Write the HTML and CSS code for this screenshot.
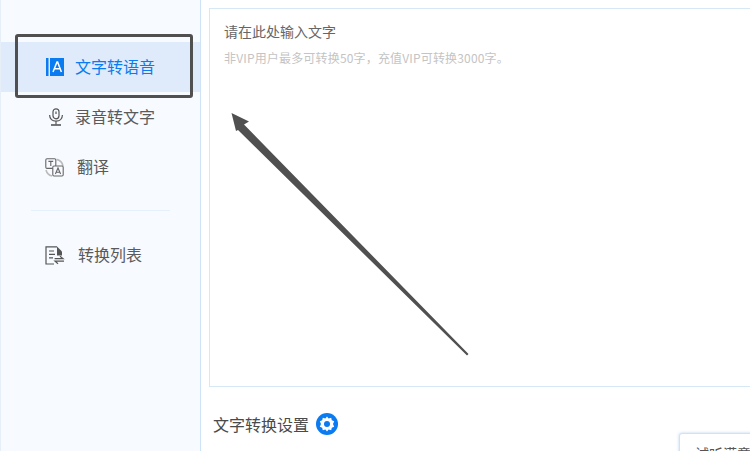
FILE: index.html
```html
<!DOCTYPE html>
<html lang="zh-CN">
<head>
    <meta charset="UTF-8">
    <title>文字转语音</title>
    <link rel="stylesheet" href="styles.css">
</head>
<body>
    <div class="page">
        <!-- Sidebar -->
        <aside class="sidebar">
            <ul class="menu">
                <li class="menu-item active">
                    <svg class="icon icon-tts" width="18" height="18" viewBox="0 0 18 18">
                        <rect x="0" y="0" width="2.5" height="18" fill="#0a7bf0"/>
                        <rect x="4" y="0" width="14" height="18" fill="#0a7bf0"/>
                        <path d="M7 14 L11 4 L11.6 4 L15.4 14 M8.2 10.8 H14.2" fill="none" stroke="#fff" stroke-width="1.5"/>
                    </svg>
                    <span>文字转语音</span>
                </li>
                <li class="menu-item shift-1">
                    <svg class="icon" width="18" height="18" viewBox="0 0 18 18" fill="none" stroke="#555" stroke-width="1.2">
                        <rect x="6" y="0.8" width="6" height="10" rx="3"/>
                        <path d="M9 3.6 V6" />
                        <path d="M2.6 7 C2.6 11 5.4 13.2 9 13.2 C12.6 13.2 15.4 11 15.4 7"/>
                        <path d="M9 13.2 V16.4"/>
                        <path d="M4 17 H14" stroke-width="1.6"/>
                    </svg>
                    <span>录音转文字</span>
                </li>
                <li class="menu-item shift-2">
                    <svg class="icon" width="19" height="19" viewBox="0 0 19 19" fill="none" stroke="#666" stroke-width="1.1">
                        <path d="M11.5 1.4 A8.4 8.4 0 0 1 18 8" stroke="#bbb" stroke-width="1.6"/>
                        <path d="M1 12 A8.4 8.4 0 0 0 7 18" stroke="#bbb" stroke-width="1.6"/>
                        <rect x="0.8" y="0.8" width="10" height="9.6" rx="1.2" fill="#f7faff"/>
                        <path d="M3.4 3.4 H8.2 M5.8 3.4 V8"/>
                        <rect x="7.8" y="8" width="10.4" height="10" rx="1.2" fill="#f7faff"/>
                        <path d="M10.4 16 L13 10 L15.6 16 M11.2 14.2 H14.8"/>
                    </svg>
                    <span>翻译</span>
                </li>
            </ul>
            <div class="menu-divider"></div>
            <ul class="menu">
                <li class="menu-item shift-3">
                    <svg class="icon" width="20" height="19" viewBox="0 0 20 19" fill="none" stroke="#555" stroke-width="1.2">
                        <path d="M12 0.8 H1 V18 H9"/>
                        <path d="M12 0.6 L17 5.6 V9.4 H12 Z" fill="#555" stroke="none"/>
                        <path d="M4 5 H9 M4 8.4 H10 M4 11.8 H8"/>
                        <path d="M9.6 12.6 H18 L15 10.2"/>
                        <path d="M19 15.2 H10 L13 17.8"/>
                    </svg>
                    <span>转换列表</span>
                </li>
            </ul>
        </aside>

        <!-- Main content -->
        <main class="content">
            <div class="input-box">
                <p class="input-tip">请在此处输入文字</p>
                <p class="input-hint">非VIP用户最多可转换50字，充值VIP可转换3000字。</p>
            </div>
            <div class="settings-title">
                <span>文字转换设置</span>
                <svg class="gear" width="22" height="22" viewBox="0 0 22 22">
                    <circle cx="11" cy="11" r="11" fill="#0a7bf0"/>
                    <path d="M11 3.4 L12.6 5.4 L15.2 4.8 L15.8 7.2 L18.2 8.2 L17 11 L18.2 13.8 L15.8 14.8 L15.2 17.2 L12.6 16.6 L11 18.6 L9.4 16.6 L6.8 17.2 L6.2 14.8 L3.8 13.8 L5 11 L3.8 8.2 L6.2 7.2 L6.8 4.8 L9.4 5.4 Z" fill="#fff"/>
                    <circle cx="11" cy="11" r="3" fill="#0a7bf0"/>
                </svg>
            </div>
        </main>
    </div>

    <!-- Annotation drawn over the screenshot -->
    <div class="mark-box"></div>
    <svg class="mark-arrow" width="750" height="451" viewBox="0 0 750 451">
        <polygon points="231.5,113 249,121.5 244,124.5 468.5,354 467,355.5 238,130 236,131" fill="#505050"/>
    </svg>

    <!-- Floating button clipped by the window -->
    <div class="listen-pop">试听满意</div>
</body>
</html>
```

FILE: styles.css
```css
/* General Styles */
* {
    margin: 0;
    padding: 0;
    box-sizing: border-box;
}

html, body {
    height: 100%;
    overflow: hidden;
}

body {
    font-family: "Noto Sans CJK SC", "Open Sans", sans-serif;
    background-color: #fff;
    color: #555;
    position: relative;
}

.page {
    display: flex;
    height: 451px;
}

/* Sidebar */
.sidebar {
    width: 201px;
    flex-shrink: 0;
    padding-top: 42px;
    background-color: #f7faff;
    border-left: 1px solid #e6eef8;
    border-right: 1px solid #cfe3f6;
}

.menu {
    list-style-type: none;
}

.menu-item {
    height: 50px;
    display: flex;
    align-items: center;
    padding-left: 45px;
    font-size: 16px;
    line-height: 50px;
    color: #5a5a5a;
}

.menu-item span {
    margin-top: -2px;
}

.menu-item .icon {
    flex-shrink: 0;
    margin-right: 11px;
}

.menu-item.active {
    background-color: #dfeafa;
    color: #0a7bf0;
}

.menu-item.shift-1 {
    padding-left: 46px;
}

.menu-item.shift-1 .icon {
    margin-right: 10px;
}

.menu-item.shift-2 {
    padding-left: 44px;
}

.menu-item.shift-2 .icon {
    margin-right: 13px;
}

.menu-item.shift-3 {
    padding-left: 44px;
}

.menu-item.shift-3 .icon {
    margin-right: 13px;
}

.menu-divider {
    height: 1px;
    margin: 18px 30px 19px;
    background-color: #e6f0fa;
}

/* Main content */
.content {
    flex: 1;
    min-width: 0;
    padding: 8px 0 0 8px;
}

.input-box {
    height: 379px;
    margin-right: -2px;
    padding: 12px 14px;
    border: 1px solid #d6e8f6;
    background-color: #fff;
}

.input-tip {
    font-size: 14px;
    line-height: 20px;
    color: #666;
}

.input-hint {
    margin-top: 7px;
    font-size: 12px;
    line-height: 20px;
    letter-spacing: 0.17px;
    color: #c4c4c4;
}

.settings-title {
    display: flex;
    align-items: center;
    gap: 7px;
    margin-top: 26px;
    padding-left: 4px;
    font-size: 16px;
    line-height: 22px;
    color: #4a4a4a;
}

/* Annotation */
.mark-box {
    position: absolute;
    left: 15px;
    top: 34px;
    width: 178px;
    height: 64px;
    border: 3px solid #505050;
    border-radius: 3px;
}

.mark-arrow {
    position: absolute;
    left: 0;
    top: 0;
}

/* Floating button */
.listen-pop {
    position: absolute;
    left: 679px;
    top: 433px;
    width: 90px;
    height: 40px;
    padding: 9px 0 0 15px;
    font-size: 14px;
    line-height: 20px;
    color: #555;
    white-space: nowrap;
    background-color: #fff;
    border: 1px solid #cfe3f6;
    border-radius: 3px;
    box-shadow: 0 0 3px rgba(120, 170, 230, 0.5);
}
```
